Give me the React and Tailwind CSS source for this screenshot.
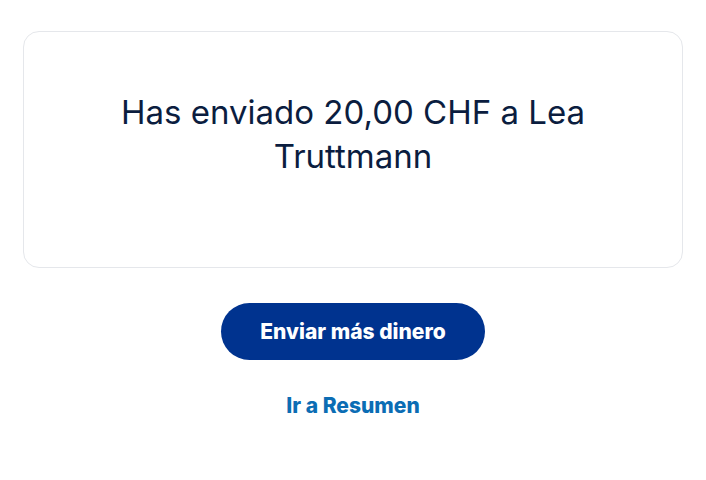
export default function App() {
  return (
    <div className="min-h-screen bg-white px-[23px] pt-[31px] font-['Inter',sans-serif]">
      <div className="flex h-[237px] items-start justify-center rounded-2xl border border-[#e5e7eb] px-12 pt-[58px]">
        <h1 className="text-center text-[33px] leading-[44px] font-normal text-[#0b1d3f]">
          Has enviado 20,00 CHF a Lea Truttmann
        </h1>
      </div>
      <div className="mt-[35px] flex flex-col items-center">
        <button className="h-[57px] w-[264px] rounded-full bg-[#00338f] text-[21px] font-extrabold text-white">
          Enviar más dinero
        </button>
        <a className="mt-[30px] text-[21px] font-extrabold text-[#0b6db4]">Ir a Resumen</a>
      </div>
    </div>
  )
}
